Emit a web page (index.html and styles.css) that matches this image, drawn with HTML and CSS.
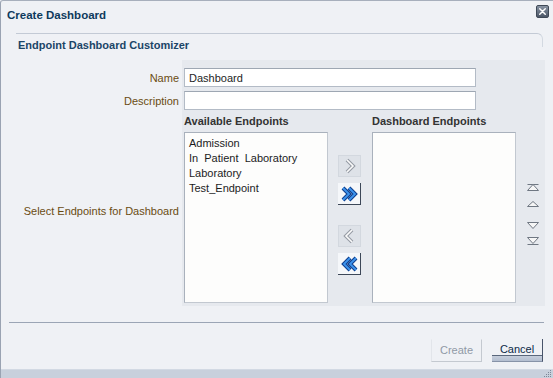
FILE: index.html
```html
<!DOCTYPE html>
<html lang="en">
<head>
<meta charset="UTF-8">
<title>Create Dashboard</title>
<link rel="stylesheet" href="styles.css">
</head>
<body>

<div class="dialog">
  <div class="titlebar">
    <span class="title">Create Dashboard</span>
    <span class="close">
      <svg width="12" height="12" viewBox="0 0 12 12"><path d="M3 3 L9 9 M9 3 L3 9" stroke="#fff" stroke-width="1.6" stroke-linecap="round"/></svg>
    </span>
  </div>

  <div class="panel">
    <div class="panel-rule"></div>
    <div class="panel-title">Endpoint Dashboard Customizer</div>
  </div>

  <div class="form">
    <div class="lbl r1">Name</div>
    <div class="field r1"><input class="text" type="text" value="Dashboard"></div>

    <div class="lbl r2">Description</div>
    <div class="field r2"><input class="text" type="text" value=""></div>

    <div class="lbl r3">Select Endpoints for Dashboard</div>
    <div class="field r3 shuttle">
      <div class="side">
        <div class="col-head">Available Endpoints</div>
        <div class="listbox">
          <div class="item">Admission</div>
          <div class="item">In  Patient  Laboratory</div>
          <div class="item">Laboratory</div>
          <div class="item">Test_Endpoint</div>
        </div>
      </div>

      <div class="moves">
        <span class="mv off">
          <svg width="21" height="20" viewBox="0 0 21 20"><path d="M8 4 L14 10 L8 16" fill="none" stroke="#959ba4" stroke-width="3.8"/><path d="M8 4 L14 10 L8 16" fill="none" stroke="#fbfbfb" stroke-width="1.6"/></svg>
        </span>
        <span class="mv on">
          <svg width="21" height="20" viewBox="0 0 21 20"><path d="M4 4 L10 10 L4 16 M10 4 L16 10 L10 16" fill="none" stroke="#0f3f8e" stroke-width="4"/><path d="M4 4 L10 10 L4 16 M10 4 L16 10 L10 16" fill="none" stroke="#3d94ee" stroke-width="1.8"/></svg>
        </span>
        <span class="mv off gap">
          <svg width="21" height="20" viewBox="0 0 21 20"><path d="M13 4 L7 10 L13 16" fill="none" stroke="#959ba4" stroke-width="3.8"/><path d="M13 4 L7 10 L13 16" fill="none" stroke="#fbfbfb" stroke-width="1.6"/></svg>
        </span>
        <span class="mv on">
          <svg width="21" height="20" viewBox="0 0 21 20"><path d="M11 4 L5 10 L11 16 M17 4 L11 10 L17 16" fill="none" stroke="#0f3f8e" stroke-width="4"/><path d="M11 4 L5 10 L11 16 M17 4 L11 10 L17 16" fill="none" stroke="#3d94ee" stroke-width="1.8"/></svg>
        </span>
      </div>

      <div class="side">
        <div class="col-head">Dashboard Endpoints</div>
        <div class="listbox"></div>
      </div>

      <div class="order">
        <svg width="12" height="12" viewBox="0 0 12 12"><path d="M0.5 2.5 H11.5" stroke="#6f7782"/><path d="M6 2.5 L11.5 8.5 H0.5 Z" fill="#f6f6f6" stroke="#6f7782"/></svg>
        <svg width="12" height="12" viewBox="0 0 12 12"><path d="M6 3.5 L11.5 8.5 H0.5 Z" fill="#f6f6f6" stroke="#6f7782"/></svg>
        <svg class="down" width="12" height="12" viewBox="0 0 12 12"><path d="M0.5 3.5 H11.5 L6 9.5 Z" fill="#f6f6f6" stroke="#6f7782"/></svg>
        <svg width="12" height="12" viewBox="0 0 12 12"><path d="M0.5 2.5 H11.5 L6 8.5 Z" fill="#f6f6f6" stroke="#6f7782"/><path d="M0.5 9.5 H11.5" stroke="#6f7782"/></svg>
      </div>
    </div>
  </div>

  <div class="sep"></div>

  <div class="footer">
    <button class="btn disabled">Create</button>
    <button class="btn">Cancel</button>
  </div>

  <div class="statusbar">
    <svg width="11" height="8" viewBox="0 0 11 8">
      <rect x="9" y="0" width="1" height="1" fill="#7d8797"/>
      <rect x="7" y="2" width="1" height="1" fill="#7d8797"/>
      <rect x="9" y="2" width="1" height="1" fill="#7d8797"/>
      <rect x="5" y="4" width="1" height="1" fill="#7d8797"/>
      <rect x="7" y="4" width="1" height="1" fill="#7d8797"/>
      <rect x="9" y="4" width="1" height="1" fill="#7d8797"/>
      <rect x="3" y="6" width="1" height="1" fill="#7d8797"/>
      <rect x="5" y="6" width="1" height="1" fill="#7d8797"/>
      <rect x="7" y="6" width="1" height="1" fill="#7d8797"/>
      <rect x="9" y="6" width="1" height="1" fill="#7d8797"/>
    </svg>
  </div>
</div>

</body>
</html>
```

FILE: styles.css
```css
* { margin: 0; padding: 0; box-sizing: border-box; }

body {
  font-family: "Liberation Sans", Arial, sans-serif;
  font-size: 11px;
  background: #eff1f5;
  color: #222;
  overflow: hidden;
}

.dialog {
  width: 553px;
  height: 378px;
  background: #eff1f5;
  border-left: 1px solid #9aa3b2;
  border-top: 1px solid #a7afbc;
  border-top-left-radius: 3px;
  display: flex;
  flex-direction: column;
}

/* title bar */
.titlebar {
  height: 27px;
  display: flex;
  justify-content: space-between;
  align-items: center;
  padding: 0 4px 0 6px;
}

.title {
  font-size: 11.5px;
  font-weight: 700;
  color: #0e3a5c;
}

.close {
  align-self: flex-start;
  margin-top: 4px;
  width: 13px;
  height: 13px;
  border-radius: 2px;
  background: linear-gradient(#8893a3, #4b5666);
  border: 1px solid #3f4957;
  display: flex;
  align-items: center;
  justify-content: center;
}

.close svg { width: 11px; height: 11px; }

/* panel header */
.panel {
  display: grid;
  margin: 5px 10px 0 15px;
}

.panel-rule,
.panel-title { grid-area: 1 / 1; }

.panel-rule {
  height: 14px;
  border-top: 1px solid #c3cad5;
  border-right: 1px solid #d3d9e1;
  border-top-right-radius: 6px;
}

.panel-title {
  padding: 1px 0 0 2px;
  line-height: 22px;
  font-size: 11px;
  font-weight: 700;
  color: #1b4567;
}

/* form */
.form {
  margin: 4px 8px 0 0;
  display: grid;
  grid-template-columns: 181px 1fr;
}

.lbl {
  display: flex;
  align-items: center;
  justify-content: flex-end;
  padding-right: 3px;
  color: #6a4c12;
}

.field {
  background: #e6e9ee;
  padding-left: 2px;
}

.r1 { padding-top: 8px; padding-bottom: 2px; }
.r2 { padding-top: 2px; }
.r3 { padding-top: 4px; padding-bottom: 3px; }
.lbl.r3 { padding-top: 8px; }

.text {
  display: block;
  width: 292px;
  height: 19px;
  border: 1px solid #b3bbc6;
  border-top-color: #9ea7b3;
  background: #fff;
  padding: 0 4px;
  font: 11px "Liberation Sans", Arial, sans-serif;
  color: #1e1e1e;
  outline: none;
}

/* shuttle */
.shuttle { display: flex; }

.side { width: 144px; }

.col-head {
  line-height: 15px;
  font-weight: 700;
  color: #333;
}

.listbox {
  margin-top: 3px;
  height: 171px;
  background: #fdfdfc;
  border: 1px solid #c2c8d0;
  border-top-color: #a9b1bc;
  border-left-color: #a9b1bc;
  padding: 3px 4px;
}

.item {
  line-height: 15px;
  color: #1c1c1c;
  white-space: pre;
}

.moves {
  width: 23px;
  margin: 0 11px 0 10px;
  padding-top: 41px;
  display: flex;
  flex-direction: column;
  gap: 6px;
}

.mv {
  height: 22px;
  display: flex;
  align-items: center;
  justify-content: center;
}

.mv svg { flex-shrink: 0; }

.mv.off {
  background: #dee2e8;
  border: 1px solid #d3d8df;
}

.mv.on {
  background: #f5f7fa;
  border-right: 1px solid #3c4758;
  border-bottom: 1px solid #3c4758;
}

.mv.gap { margin-top: 14px; }

.order {
  width: 12px;
  margin-left: 11px;
  padding-top: 68px;
  display: flex;
  flex-direction: column;
  gap: 4px;
}

.order .down { margin-top: 5px; }

/* footer */
.sep {
  margin: 16px 9px 0 8px;
  height: 1px;
  background: #9ba5b5;
}

.footer {
  padding: 16px 10px 0 0;
  display: flex;
  justify-content: flex-end;
  gap: 10px;
}

.btn {
  width: 51px;
  height: 23px;
  font: 11px "Liberation Sans", Arial, sans-serif;
  color: #0c2a48;
  background: linear-gradient(transparent 0 16px, #59667b 16px 17px, #c6cedb 17px, #b3bed0);
  border: none;
  border-right: 1px solid #48546a;
  border-bottom: 1px solid #8793a8;
  padding-bottom: 2px;
}

.btn.disabled {
  color: #8f99a6;
  background: transparent;
  border: 1px solid #d2d6dc;
  border-top-color: transparent;
  border-left-color: #e2e5ea;
  border-right-color: #c4c9d0;
  border-bottom-color: #c4c9d0;
}

.statusbar {
  margin-top: auto;
  height: 9px;
  background: #c8d0dc;
  border-top: 1px solid #d2d9e3;
  display: flex;
  justify-content: flex-end;
  align-items: flex-end;
  padding-right: 1px;
}
```
